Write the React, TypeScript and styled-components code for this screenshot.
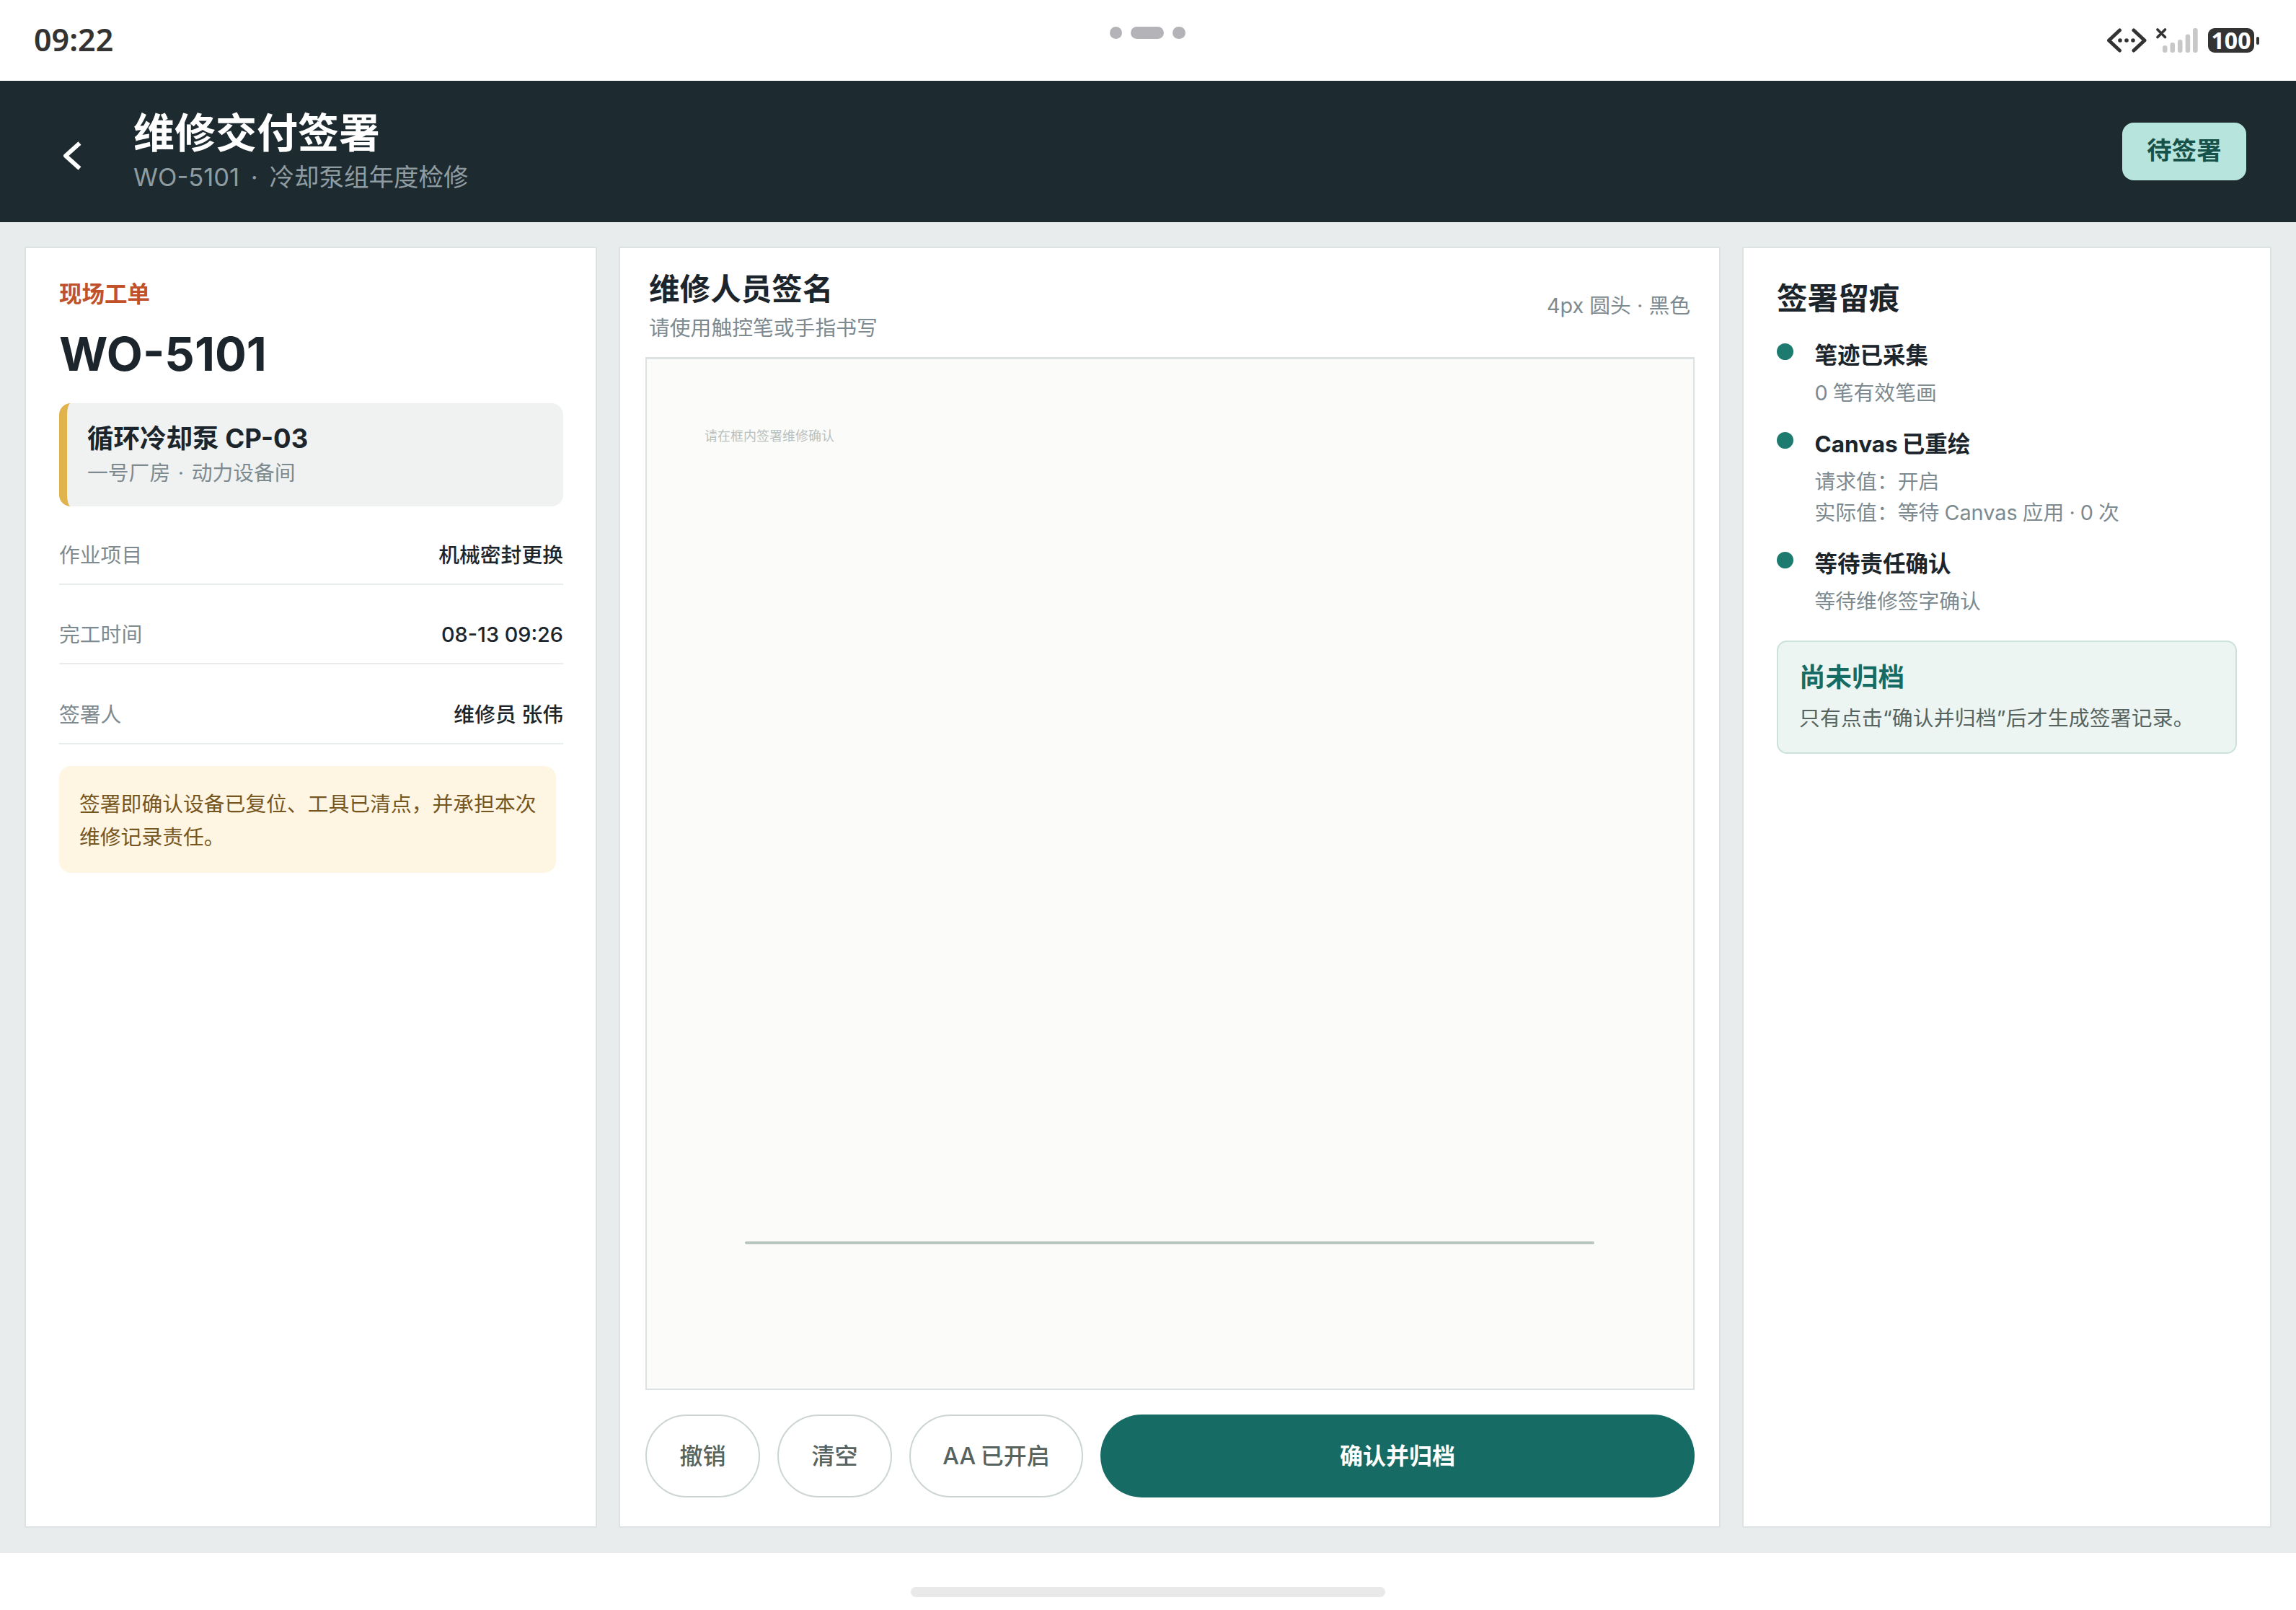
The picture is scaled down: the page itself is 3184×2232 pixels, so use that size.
import React from "react";
import styled, { createGlobalStyle } from "styled-components";

const Global = createGlobalStyle`
  html, body { margin: 0; padding: 0; background: #fff; }
  body { font-family: Inter, "Noto Sans CJK SC", sans-serif; color: #1b252b; }
  * { box-sizing: border-box; }
`;

const Page = styled.div`
  width: 3184px;
  height: 2232px;
  display: flex;
  flex-direction: column;
  overflow: hidden;
  background: #fff;
`;

const StatusBar = styled.div`
  height: 112px;
  flex: none;
  display: grid;
  grid-template-columns: 1fr auto 1fr;
  padding: 0 51px 0 47px;
  background: #fff;
`;
const Time = styled.div`
  font-family: "Noto Sans", sans-serif;
  font-size: 43px;
  line-height: 110px;
  font-weight: 600;
  color: #333;
`;
const CameraDots = styled.div`
  display: flex;
  gap: 12px;
  margin: 37px 0 0 2px;
  height: 17px;
`;
const CameraDot = styled.span<{ $w: number }>`
  display: block;
  width: ${(p) => p.$w}px;
  height: 17px;
  border-radius: 9px;
  background: #b4b4b8;
`;
const StatusIcons = styled.div`
  display: flex;
  justify-content: flex-end;
  align-items: flex-start;
  padding-top: 39px;
  gap: 13px;
`;
const BatteryWrap = styled.div`
  display: flex;
  align-items: center;
  gap: 3px;
  margin-left: 1px;
`;
const BatteryBody = styled.div`
  width: 64px;
  height: 34px;
  border-radius: 9px;
  background: #333;
  color: #fff;
  font-family: "Noto Sans", sans-serif;
  font-size: 32px;
  font-weight: 700;
  line-height: 34px;
  text-align: center;
`;
const BatteryTip = styled.div`
  width: 4px;
  height: 11px;
  border-radius: 2px;
  background: #333;
`;

const Header = styled.header`
  height: 196px;
  flex: none;
  display: flex;
  align-items: center;
  padding: 0 69px 0 87px;
  background: #1d2a2f;
  color: #fff;
`;
const BackIcon = styled.svg`
  width: 26px;
  height: 40px;
  flex: none;
  margin: 12px 72px 0 0;
`;
const HeaderText = styled.div`
  flex: 1;
  display: flex;
  flex-direction: column;
  gap: 1px;
`;
const HeaderTitle = styled.div`
  font-size: 57px;
  line-height: 70px;
  font-weight: 700;
`;
const HeaderSub = styled.div`
  font-size: 34.5px;
  line-height: 50px;
  word-spacing: 6px;
  color: #8f9ca1;
`;
const Badge = styled.div`
  width: 172px;
  height: 80px;
  border-radius: 16px;
  background: #b7e5dd;
  color: #17524a;
  font-size: 34.5px;
  font-weight: 700;
  line-height: 78px;
  text-align: center;
`;

const Main = styled.main`
  flex: 1;
  display: grid;
  grid-template-columns: 794px 1528px 734px;
  column-gap: 30px;
  padding: 34px 34px 35px;
  background: #e8ecec;
  min-height: 0;
`;
const Panel = styled.section`
  background: #fff;
  border: 2px solid #dde3e3;
  border-radius: 2px;
  min-height: 0;
`;
const InfoPanel = styled(Panel)`
  padding: 44px 45px 0 46px;
`;
const Eyebrow = styled.div`
  font-size: 31.5px;
  line-height: 40px;
  font-weight: 700;
  color: #c0512a;
`;
const OrderNo = styled.div`
  margin-top: 23px;
  font-size: 65px;
  line-height: 80px;
  font-weight: 700;
  color: #1b252b;
`;
const EquipCard = styled.div`
  margin-top: 28px;
  height: 143px;
  padding: 26px 29px 0 28px;
  background: #f0f2f2;
  border-left: 11px solid #e0b34c;
  border-radius: 16px;
`;
const EquipName = styled.div`
  font-size: 36.5px;
  line-height: 46px;
  font-weight: 700;
`;
const EquipPlace = styled.div`
  margin-top: 5px;
  font-size: 28.8px;
  line-height: 40px;
  word-spacing: 2.5px;
  color: #7d8a90;
`;
const InfoRows = styled.div`
  margin-top: -2px;
`;
const InfoRow = styled.div`
  display: flex;
  justify-content: space-between;
  padding: 51.5px 0 21px;
  border-bottom: 2px solid #e8ecec;
  font-size: 28.8px;
  line-height: 36px;
`;
const RowLabel = styled.span`
  color: #7d8a90;
`;
const RowValue = styled.span`
  font-weight: 500;
  color: #1b252b;
`;
const Notice = styled.div`
  margin-top: 30.5px;
  width: 689px;
  height: 148px;
  padding: 30px 25px 26px 28px;
  border-radius: 16px;
  background: #fff5e3;
  color: #75561f;
  font-size: 28.8px;
  line-height: 46px;
`;

const SignPanel = styled(Panel)`
  display: flex;
  flex-direction: column;
  padding: 29px 34px 38px 35px;
`;
const SignHead = styled.div`
  display: flex;
  justify-content: space-between;
  align-items: center;
  padding: 0 6px 0 5px;
`;
const SignTitle = styled.div`
  font-size: 42.6px;
  line-height: 56px;
  font-weight: 700;
`;
const SignSub = styled.div`
  margin-top: 6px;
  font-size: 28.8px;
  line-height: 40px;
  color: #7d8a90;
`;
const PenInfo = styled.div`
  font-size: 28.8px;
  line-height: 40px;
  color: #7d8a90;
`;
const SignCanvas = styled.div`
  position: relative;
  flex: 1;
  margin-top: 20px;
  background: #fbfbf9;
  border: 2px solid #dce2e2;
  border-top-width: 3px;
`;
const CanvasHint = styled.div`
  position: absolute;
  left: 80px;
  top: 95px;
  font-size: 18px;
  line-height: 24px;
  color: #b9c1bf;
`;
const GuideLine = styled.div`
  position: absolute;
  left: 136px;
  top: 1223px;
  width: 1178px;
  height: 4px;
  border-radius: 2px;
  background: #b9c6c0;
`;
const Actions = styled.div`
  display: flex;
  gap: 24px;
  margin-top: 34px;
  height: 115px;
  margin-bottom: 2px;
`;
const GhostButton = styled.button<{ $w: number }>`
  width: ${(p) => p.$w}px;
  flex: none;
  padding: 0 0 5px;
  border: 2px solid #cdd5d3;
  border-radius: 58px;
  background: #fff;
  color: #56635f;
  font-family: inherit;
  font-size: 32px;
  font-weight: 500;
  word-spacing: -2px;
`;
const PrimaryButton = styled.button`
  flex: 1;
  padding: 0 0 5px;
  border: 0;
  border-radius: 58px;
  background: #166c64;
  color: #fff;
  font-family: inherit;
  font-size: 32px;
  font-weight: 700;
`;

const TracePanel = styled(Panel)`
  padding: 41.5px 46px 0;
`;
const TraceTitle = styled.div`
  font-size: 42.6px;
  line-height: 56px;
  font-weight: 700;
`;
const TraceList = styled.div`
  margin-top: 29.5px;
  display: flex;
  flex-direction: column;
  gap: 27px;
`;
const TraceItem = styled.div`
  display: grid;
  grid-template-columns: 23px 1fr;
  column-gap: 29.5px;
`;
const TraceDot = styled.span`
  display: block;
  width: 23px;
  height: 23px;
  margin-top: 5px;
  border-radius: 50%;
  background: #1d7a6e;
`;
const TraceName = styled.div`
  font-size: 31.5px;
  line-height: 44px;
  font-weight: 700;
  word-spacing: -1.5px;
  margin-bottom: 8px;
`;
const TraceLine = styled.div`
  font-size: 28.8px;
  line-height: 43.6px;
  word-spacing: -1px;
  color: #7d8a90;
`;
const ArchiveBox = styled.div`
  margin-top: 33px;
  height: 157px;
  padding: 24px 29px 0;
  background: #ecf5f2;
  border: 2px solid #cbe2dc;
  border-radius: 14px;
`;
const ArchiveTitle = styled.div`
  font-size: 36.5px;
  line-height: 50px;
  font-weight: 700;
  color: #166c64;
`;
const ArchiveText = styled.div`
  margin-top: 11px;
  font-size: 28.8px;
  line-height: 42px;
  letter-spacing: 0.2px;
  color: #56635f;
`;

const HomeArea = styled.div`
  height: 79px;
  flex: none;
  display: flex;
  justify-content: center;
  padding-top: 47px;
  background: #fff;
`;
const HomeBar = styled.div`
  width: 658px;
  height: 14px;
  border-radius: 7px;
  background: #e9e9e9;
`;

const rows = [
  ["作业项目", "机械密封更换"],
  ["完工时间", "08-13 09:26"],
  ["签署人", "维修员 张伟"],
];

const traces = [
  { name: "笔迹已采集", lines: ["0 笔有效笔画"] },
  { name: "Canvas 已重绘", lines: ["请求值：开启", "实际值：等待 Canvas 应用 · 0 次"] },
  { name: "等待责任确认", lines: ["等待维修签字确认"] },
];

export default function App() {
  return (
    <Page>
      <Global />
      <StatusBar>
        <Time>09:22</Time>
        <CameraDots>
          <CameraDot $w={17} />
          <CameraDot $w={46} />
          <CameraDot $w={18} />
        </CameraDots>
        <StatusIcons>
          <svg width="56" height="34" viewBox="0 0 56 34" fill="none">
            <path d="M18.5 3 L3.5 17 L18.5 31 M38 3 L53 17 L38 31" stroke="#333" strokeWidth="5" strokeLinecap="round" strokeLinejoin="round" />
            <circle cx="19" cy="17" r="2.8" fill="#333" />
            <circle cx="28" cy="17" r="2.8" fill="#333" />
            <circle cx="37" cy="17" r="2.8" fill="#333" />
          </svg>
          <svg width="58" height="34" viewBox="0 0 58 34" fill="none">
            <path d="M2 2 L12.5 12.5 M12.5 2 L2 12.5" stroke="#333" strokeWidth="3.6" strokeLinecap="round" />
            <rect x="9" y="24" width="6.5" height="10" rx="3" fill="#c8c8c8" />
            <rect x="19.5" y="20" width="6.5" height="14" rx="3" fill="#c8c8c8" />
            <rect x="30" y="16" width="6.5" height="18" rx="3" fill="#c8c8c8" />
            <rect x="40.7" y="8.5" width="6.5" height="25.5" rx="3" fill="#c8c8c8" />
            <rect x="51" y="0" width="6.7" height="34" rx="3" fill="#c8c8c8" />
          </svg>
          <BatteryWrap>
            <BatteryBody>100</BatteryBody>
            <BatteryTip />
          </BatteryWrap>
        </StatusIcons>
      </StatusBar>

      <Header>
        <BackIcon viewBox="0 0 26 40" fill="none">
          <path d="M23.5 2.5 L4 20 L23.5 37.5" stroke="#fff" strokeWidth="5.8" strokeLinejoin="round" />
        </BackIcon>
        <HeaderText>
          <HeaderTitle>维修交付签署</HeaderTitle>
          <HeaderSub>WO-5101 · 冷却泵组年度检修</HeaderSub>
        </HeaderText>
        <Badge>待签署</Badge>
      </Header>

      <Main>
        <InfoPanel>
          <Eyebrow>现场工单</Eyebrow>
          <OrderNo>WO-5101</OrderNo>
          <EquipCard>
            <EquipName>循环冷却泵 CP-03</EquipName>
            <EquipPlace>一号厂房 · 动力设备间</EquipPlace>
          </EquipCard>
          <InfoRows>
            {rows.map(([label, value]) => (
              <InfoRow key={label}>
                <RowLabel>{label}</RowLabel>
                <RowValue>{value}</RowValue>
              </InfoRow>
            ))}
          </InfoRows>
          <Notice>签署即确认设备已复位、工具已清点，并承担本次维修记录责任。</Notice>
        </InfoPanel>

        <SignPanel>
          <SignHead>
            <div>
              <SignTitle>维修人员签名</SignTitle>
              <SignSub>请使用触控笔或手指书写</SignSub>
            </div>
            <PenInfo>4px 圆头 · 黑色</PenInfo>
          </SignHead>
          <SignCanvas>
            <CanvasHint>请在框内签署维修确认</CanvasHint>
            <GuideLine />
          </SignCanvas>
          <Actions>
            <GhostButton $w={159}>撤销</GhostButton>
            <GhostButton $w={159}>清空</GhostButton>
            <GhostButton $w={241}>AA 已开启</GhostButton>
            <PrimaryButton>确认并归档</PrimaryButton>
          </Actions>
        </SignPanel>

        <TracePanel>
          <TraceTitle>签署留痕</TraceTitle>
          <TraceList>
            {traces.map((t) => (
              <TraceItem key={t.name}>
                <TraceDot />
                <div>
                  <TraceName>{t.name}</TraceName>
                  {t.lines.map((l) => (
                    <TraceLine key={l}>{l}</TraceLine>
                  ))}
                </div>
              </TraceItem>
            ))}
          </TraceList>
          <ArchiveBox>
            <ArchiveTitle>尚未归档</ArchiveTitle>
            <ArchiveText>只有点击“确认并归档”后才生成签署记录。</ArchiveText>
          </ArchiveBox>
        </TracePanel>
      </Main>

      <HomeArea>
        <HomeBar />
      </HomeArea>
    </Page>
  );
}
